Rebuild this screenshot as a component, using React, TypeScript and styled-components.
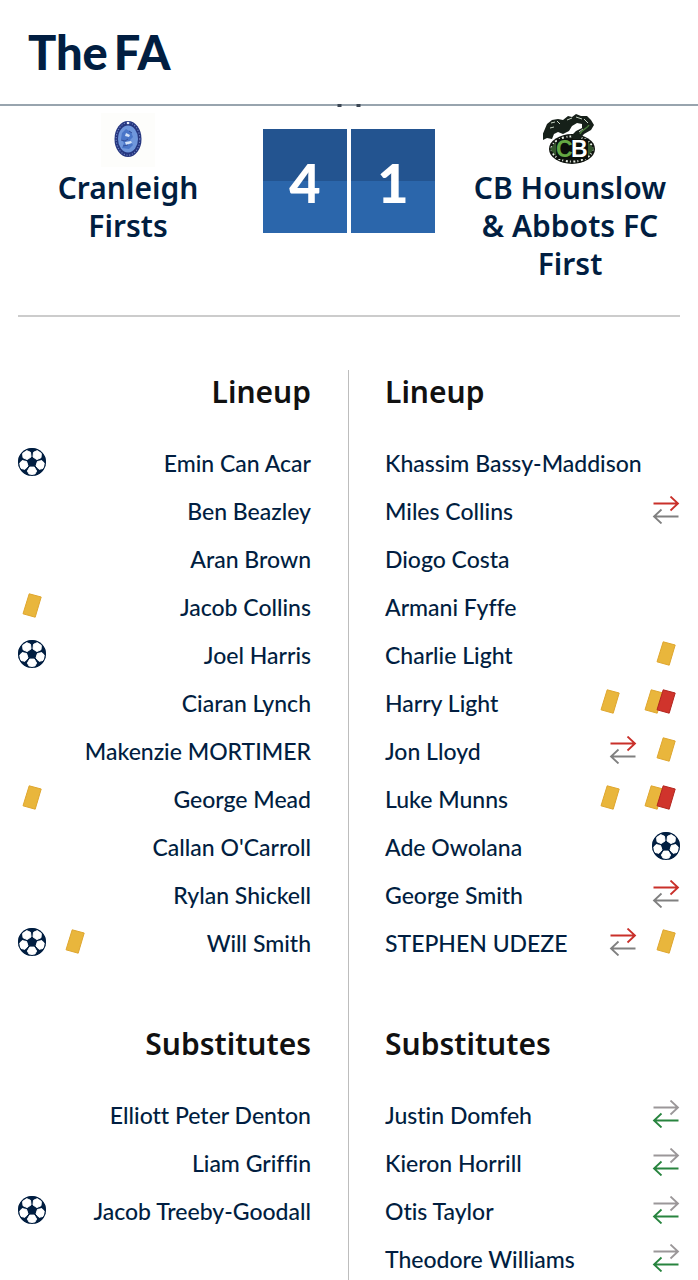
import React from "react";
import styled, { createGlobalStyle } from "styled-components";

const navy = "#011e41";
const body = `Lato, "Open Sans", sans-serif`;
const display = `"Noto Sans", "Open Sans", sans-serif`;

const GlobalStyle = createGlobalStyle`
  * { box-sizing: border-box; }
  body { margin: 0; background: #fff; color: ${navy}; font-family: ${body}; font-variant-ligatures: none; }
  h2, h3, ul { margin: 0; padding: 0; }
`;

const Page = styled.div`
  min-height: 100vh;
`;

const Header = styled.header`
  position: relative;
  display: flex;
  align-items: center;
  height: 106px;
  padding: 0 28px;
  border-bottom: 2px solid #98a4ae;
`;

const Logo = styled.a`
  display: flex;
  gap: 6px;
  color: ${navy};
  font-size: 47px;
  font-weight: 900;
  line-height: 56px;
  text-decoration: none;
`;

const Descenders = styled.span`
  position: absolute;
  top: 104px;
  left: 50%;
  display: flex;
  gap: 15px;
  transform: translateX(-50%);
  &::before, &::after {
    content: "";
    width: 4px;
    height: 3px;
    background: #3b4654;
  }
`;

const Scoreboard = styled.section`
  display: grid;
  grid-template-columns: minmax(0, 1fr) 172px minmax(0, 1fr);
  column-gap: 25px;
  align-items: start;
  margin: 0 18px;
  padding: 7px 0 32px;
  border-bottom: 2px solid #cccccc;
`;

const Team = styled.div`
  display: flex;
  flex-direction: column;
  gap: 2px;
  align-items: center;
  padding: 0 12px;
`;

const TeamName = styled.h2`
  font-family: ${display};
  font-size: 30px;
  font-weight: 600;
  line-height: 38px;
  text-align: center;
`;

const Score = styled.div`
  display: grid;
  grid-template-columns: 1fr 1fr;
  gap: 4px;
  margin-top: 16px;
`;

const Digit = styled.span`
  height: 104px;
  background: linear-gradient(#235490 50%, #2b66ab 50%);
  color: #fff;
  font-size: 54px;
  font-weight: 900;
  line-height: 108px;
  text-align: center;
`;

const Teams = styled.main`
  display: grid;
  grid-template-columns: 1fr 1fr;
  margin: 53px 18px 0;
`;

const Side = styled.section<{ $home?: boolean }>`
  padding: ${(p) => (p.$home ? "0 37px 0 0" : "0 0 0 36px")};
  border-right: ${(p) => (p.$home ? "1px solid #bdbdbd" : "0")};
  text-align: ${(p) => (p.$home ? "right" : "left")};
`;

const Heading = styled.h3`
  margin-bottom: 25px;
  color: #111;
  font-family: ${display};
  font-size: 30px;
  font-weight: 600;
  line-height: 44px;
`;

const Players = styled.ul`
  margin-bottom: 55px;
  list-style: none;
`;

const Row = styled.li<{ $home?: boolean }>`
  display: flex;
  flex-direction: ${(p) => (p.$home ? "row-reverse" : "row")};
  align-items: center;
  justify-content: space-between;
  height: 48px;
  font-size: 23px;
  font-weight: 500;
  line-height: 30px;
  white-space: nowrap;
`;

const Events = styled.span`
  display: flex;
  gap: 15px;
  align-items: center;
  margin-bottom: 2px;
`;

type Event = "goal" | "yellow" | "second" | "off" | "on";

const hexPoints = (cx: number, cy: number, r: number, turn: number) =>
  Array.from({ length: 6 }, (_, i) => {
    const a = ((turn + i * 60) * Math.PI) / 180;
    return `${(cx + r * Math.cos(a)).toFixed(1)},${(cy + r * Math.sin(a)).toFixed(1)}`;
  }).join(" ");

const Ball = () => (
  <svg width="28" height="28" viewBox="0 0 28 28" role="img" aria-label="Goal">
    <circle cx="14" cy="14" r="14" fill={navy} />
    {[90, 162, 234, 306, 18].map((a) => (
      <polygon
        key={a}
        points={hexPoints(
          14 + 8.9 * Math.cos((a * Math.PI) / 180),
          14.2 + 8.9 * Math.sin((a * Math.PI) / 180),
          4.6,
          a + 30
        )}
        fill="#fff"
        stroke="#fff"
        strokeWidth="1"
        strokeLinejoin="round"
      />
    ))}
    <polygon points="14,9.5 18.5,12.8 16.9,18.1 11.1,18.1 9.5,12.8" fill={navy} />
    <circle cx="14" cy="14" r="13.5" fill="none" stroke={navy} />
  </svg>
);

const yellow = { fill: "#e9b63c", stroke: "#dfa62f" };
const red = { fill: "#d0342c", stroke: "#b3261f" };
const card = "7.2,0.8 19.2,4 13.2,24.2 1,20.8";

const Yellow = () => (
  <svg width="28" height="26" viewBox="-4 0 28 26" role="img" aria-label="Yellow card">
    <polygon points={card} {...yellow} />
  </svg>
);

const SecondYellow = () => (
  <svg width="41" height="26" viewBox="0 0 41 26" role="img" aria-label="Second yellow card, sent off">
    <polygon points={card} transform="translate(5 0)" {...yellow} />
    <polygon points={card} transform="translate(17 0)" {...red} />
  </svg>
);

const Swap = ({ top, bottom, label }: { top: string; bottom: string; label: string }) => (
  <svg width="28" height="28" viewBox="0 0 28 28" fill="none" strokeWidth="1.8" role="img" aria-label={label}>
    <path d="M1.5 7.5H26M18.5 0.5L26 7.5L18.5 14.5" stroke={top} />
    <path d="M26.5 20.5H2M9.5 13.5L2 20.5L9.5 27.5" stroke={bottom} />
  </svg>
);

const EventIcon = ({ type }: { type: Event }) => {
  if (type === "goal") return <Ball />;
  if (type === "yellow") return <Yellow />;
  if (type === "second") return <SecondYellow />;
  if (type === "off") return <Swap top="#c9302a" bottom="#808080" label="Substituted off" />;
  return <Swap top="#9b9799" bottom="#28843f" label="Substituted on" />;
};

const HomeCrest = () => (
  <svg width="54" height="54" viewBox="0 0 54 54" role="img" aria-label="Cranleigh crest">
    <rect width="54" height="54" fill="#fdfdfb" />
    <ellipse cx="27" cy="26" rx="13.5" ry="18" fill="#25367f" />
    <ellipse cx="27" cy="26" rx="11.8" ry="16.2" fill="none" stroke="#7387c4" strokeWidth="1.1" strokeDasharray="1.2 1.6" />
    <ellipse cx="27" cy="26" rx="10" ry="13.4" fill="#6f97dc" />
    <path d="M21 20l4-4 5 3 2 5-3 3 3 5-4 4-7-1 2-5-3-4z" fill="#4a76c8" />
    <path d="M25 20l4 2-1 2-4-1zM24 29l6-1 1 2-6 2z" fill="#d6e4f8" />
    <path d="M20 27l4 1 3-2M22 33l5-1M28 18l3 2" fill="none" stroke="#35519d" />
    <circle cx="27" cy="10" r="1.2" fill="#eef3ff" />
  </svg>
);

const AwayCrest = () => (
  <svg width="54" height="54" viewBox="0 0 54 54" role="img" aria-label="CB Hounslow crest">
    <ellipse cx="29" cy="36" rx="23" ry="15" fill="#101510" />
    <ellipse cx="29" cy="36" rx="20.5" ry="12.6" fill="none" stroke="#e8eee4" strokeWidth="2" strokeDasharray="2 2.6 1 2" />
    <path d="M7 36l6-7v14zM51 36l-6-7v14z" fill="#33552c" />
    <path d="M4 11l5-4 6-1 5 1 5-4 4 1 4-3 5 2 6 0 4 4 3 5-3 5-7 4-4 5-6 1-3-4 5-5 6-3 0-4-5-1-5 3-3 5-6 3-5-2-4 2-2 5-5-1-4 2-1-4z" fill="#162019" />
    <path d="M8 10l4-1M14 8l3 3M24 7l5-2M33 4l6 2M41 6l4 4M7 15l4-1M40 16l-4 3" stroke="#c6d3c2" strokeWidth="1" fill="none" />
    <path d="M46 12c-2 4-7 4-9 9" stroke="#477a37" strokeWidth="1.4" fill="none" />
    <rect x="14" y="26" width="31" height="20" fill="#0b0f0b" />
    <text x="13" y="44" fontFamily="Liberation Sans" fontWeight="700" fontSize="23" fill="#65a843">C</text>
    <text x="28" y="44" fontFamily="Liberation Sans" fontWeight="700" fontSize="23" fill="#fff">B</text>
  </svg>
);

type Player = [string, ...Event[]];

const homeLineup: Player[] = [
  ["Emin Can Acar", "goal"],
  ["Ben Beazley"],
  ["Aran Brown"],
  ["Jacob Collins", "yellow"],
  ["Joel Harris", "goal"],
  ["Ciaran Lynch"],
  ["Makenzie MORTIMER"],
  ["George Mead", "yellow"],
  ["Callan O'Carroll"],
  ["Rylan Shickell"],
  ["Will Smith", "goal", "yellow"],
];

const awayLineup: Player[] = [
  ["Khassim Bassy-Maddison"],
  ["Miles Collins", "off"],
  ["Diogo Costa"],
  ["Armani Fyffe"],
  ["Charlie Light", "yellow"],
  ["Harry Light", "yellow", "second"],
  ["Jon Lloyd", "off", "yellow"],
  ["Luke Munns", "yellow", "second"],
  ["Ade Owolana", "goal"],
  ["George Smith", "off"],
  ["STEPHEN UDEZE", "off", "yellow"],
];

const homeSubs: Player[] = [
  ["Elliott Peter Denton"],
  ["Liam Griffin"],
  ["Jacob Treeby-Goodall", "goal"],
];

const awaySubs: Player[] = [
  ["Justin Domfeh", "on"],
  ["Kieron Horrill", "on"],
  ["Otis Taylor", "on"],
  ["Theodore Williams", "on"],
];

const PlayerList = ({ title, players, home }: { title: string; players: Player[]; home?: boolean }) => (
  <>
    <Heading>{title}</Heading>
    <Players>
      {players.map(([name, ...events]) => (
        <Row key={name} $home={home}>
          <span>{name}</span>
          <Events>
            {events.map((type) => (
              <EventIcon key={type} type={type} />
            ))}
          </Events>
        </Row>
      ))}
    </Players>
  </>
);

export default function App() {
  return (
    <Page>
      <GlobalStyle />
      <Header>
        <Logo href="#">
          <span>The</span>
          <span>FA</span>
        </Logo>
        <Descenders />
      </Header>
      <Scoreboard>
        <Team>
          <HomeCrest />
          <TeamName>Cranleigh Firsts</TeamName>
        </Team>
        <Score>
          <Digit>4</Digit>
          <Digit>1</Digit>
        </Score>
        <Team>
          <AwayCrest />
          <TeamName>CB Hounslow &amp; Abbots FC First</TeamName>
        </Team>
      </Scoreboard>
      <Teams>
        <Side $home>
          <PlayerList title="Lineup" players={homeLineup} home />
          <PlayerList title="Substitutes" players={homeSubs} home />
        </Side>
        <Side>
          <PlayerList title="Lineup" players={awayLineup} />
          <PlayerList title="Substitutes" players={awaySubs} />
        </Side>
      </Teams>
    </Page>
  );
}
